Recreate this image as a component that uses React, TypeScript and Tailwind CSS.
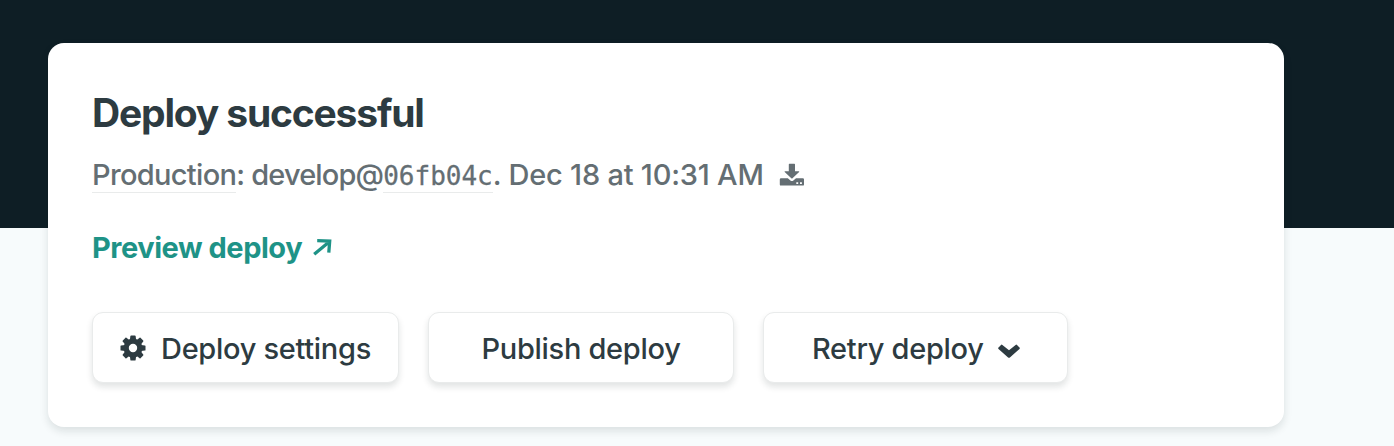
import React from "react";

function DownloadIcon() {
  return (
    <svg className="-mt-px ml-[15px] h-6 w-[26px] shrink-0" viewBox="0 0 26 24" fill="currentColor">
      <path d="M10.400 .8h5q.6 0 .6.6V8.200h3.700q1 0 .4.800L13.500 15.300Q12.900 15.900 12.300 15.300L5.700 9Q5.100 8.200 6.100 8.200H9.800V1.400q0-.6.600-.6z" />
      <path
        fillRule="evenodd"
        d="M2 15.200H8.800L11.400 17.500Q12.900 18.600 14.400 17.500L17 15.200H23.800Q25 15.200 25 16.400V21.400Q25 22.600 23.800 22.600H2Q.8 22.600 .8 21.400V16.400Q.8 15.200 2 15.200ZM17.300 19.200v1.800h1.900v-1.800zM21 19.200v1.800h1.900v-1.800z"
      />
    </svg>
  );
}

function ArrowIcon() {
  return (
    <svg className="-mt-0.5 ml-[11px] h-[18px] w-[19px] shrink-0" viewBox="0 0 19 18" fill="none" stroke="currentColor" strokeWidth="3.300">
      <path d="M1.200 16.200L16 4M4.200 2.700L16.700 3 15.800 14.700" />
    </svg>
  );
}

function GearIcon() {
  return (
    <svg className="mr-[15px] h-[26px] w-[26px] shrink-0" viewBox="-13 -13 26 26" fill="currentColor">
      <path fillRule="evenodd" d="M0-9.400a9.400 9.400 0 1 0 0 18.800a9.400 9.400 0 1 0 0-18.800ZM0-4.200a4.200 4.200 0 1 1 0 8.400a4.200 4.200 0 1 1 0-8.400Z" />
      {[0, 45, 90, 135, 180, 225, 270, 315].map((angle) => (
        <path key={angle} transform={`rotate(${angle})`} d="M-3.100-8L-2.600-11.900Q-2.500-12.500-1.900-12.500H1.900Q2.500-12.500 2.600-11.900L3.100-8Z" />
      ))}
    </svg>
  );
}

function ChevronIcon() {
  return (
    <svg className="ml-[14px] mt-1 h-[14px] w-[22px] shrink-0" viewBox="0 0 22 14" fill="currentColor">
      <path d="M.5 3.500L3 .9Q3.700 .3 4.400 .9L11 6.300 17.600 .9Q18.300 .3 19 .9L21.500 3.500Q22.200 4.200 21.500 4.900L11.900 13.400Q11 14 10.100 13.400L.5 4.900Q-.2 4.200 .5 3.500Z" />
    </svg>
  );
}

function Button({ className, children }: { className: string; children: React.ReactNode }) {
  return (
    <button
      className={`flex h-[71px] items-center rounded-[11px] border border-[#e9ebeb] bg-white pt-0.5 text-[29px] font-medium whitespace-nowrap shadow-[0_4px_6px_rgba(14,30,37,0.12)] ${className}`}
    >
      {children}
    </button>
  );
}

export default function App() {
  return (
    <div className="h-[446px] overflow-hidden bg-[#f7fbfc] bg-[linear-gradient(#0e1e25_0_228px,transparent_228px)] pt-[43px] pl-12 font-['Inter',sans-serif] text-[#2d3b41]">
      <main className="h-[384px] w-[1236px] rounded-2xl bg-white px-11 pt-[46px] shadow-[0_4px_8px_rgba(14,30,37,0.12)]">
        <h1 className="h-12 text-[39px] leading-[48px] font-bold tracking-[-1.18px] whitespace-nowrap">Deploy successful</h1>
        <p className="mt-[19px] flex h-[38px] items-center text-[29px] leading-[36px] font-[450] whitespace-nowrap text-[#646e73]">
          <a className="h-9 border-b border-[#e9ebeb] tracking-[-0.67px]">Production</a>
          <span className="tracking-[-0.85px]">: develop@</span>
          <a className="h-9 border-b border-[#e9ebeb] pt-px font-['DejaVu_Sans_Mono',monospace] text-[26px] leading-[36px] [-webkit-text-stroke:0.3px_#646e73]">06fb04c</a>
          <span className="tracking-[-0.22px] whitespace-pre">. Dec 18 at 10:31 AM</span>
          <DownloadIcon />
        </p>
        <a className="mt-9 flex h-9 items-center text-[29px] leading-[36px] font-bold tracking-[-0.47px] whitespace-nowrap text-[#1e9387]">
          <span>Preview deploy</span>
          <ArrowIcon />
        </a>
        <div className="mt-[46px] flex">
          <Button className="w-[307px] pl-[27px] tracking-[-0.3px]">
            <span className="-mt-0.5">
              <GearIcon />
            </span>
            <span>Deploy settings</span>
          </Button>
          <Button className="ml-[29px] w-[306px] justify-center tracking-[-0.3px]">
            <span>Publish deploy</span>
          </Button>
          <Button className="ml-[29px] w-[305px] pl-12 tracking-[-0.3px]">
            <span>Retry deploy</span>
            <ChevronIcon />
          </Button>
        </div>
      </main>
    </div>
  );
}
